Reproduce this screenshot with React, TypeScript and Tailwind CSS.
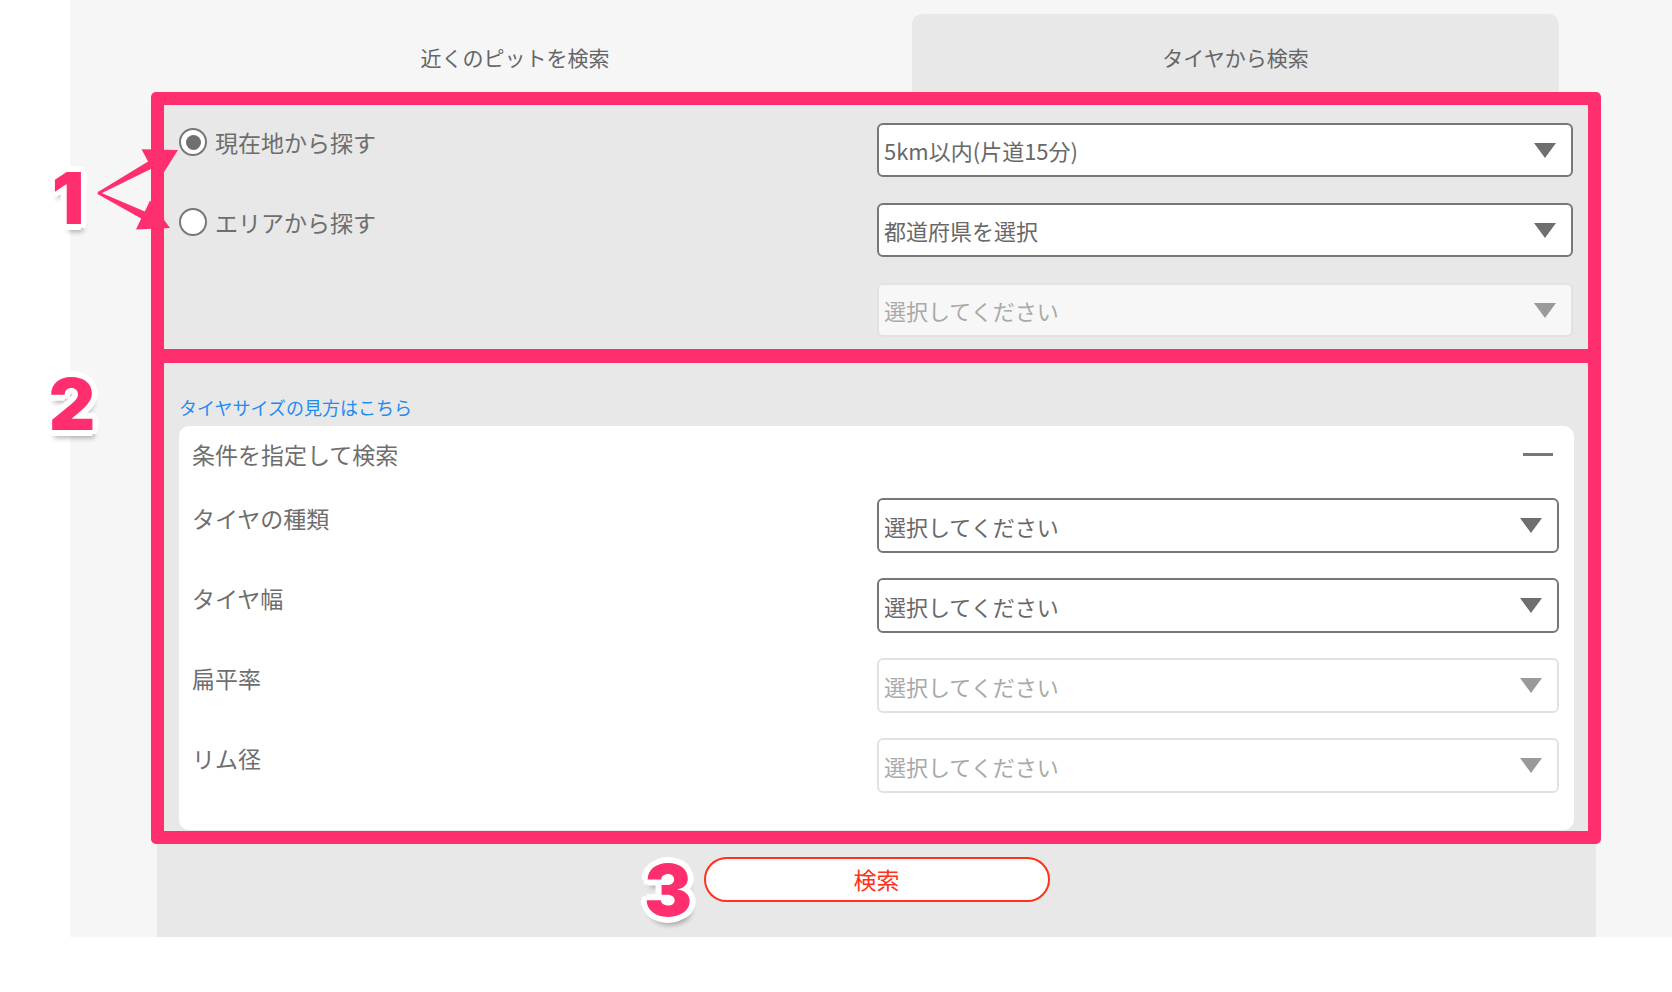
import clsx from 'clsx'

const PINK = '#ff2e6e'

interface SelectBoxProps {
  /** 表示テキスト */
  value: string
  /** 未選択状態（グレー表示） */
  disabled?: boolean
  /** 背景をグレーにする */
  grayBg?: boolean
  height?: string
}

// ▼ マーク
function Caret({ disabled }: { disabled?: boolean }) {
  return (
    <svg width="22" height="15" viewBox="0 0 22 15" className="shrink-0">
      <polygon points="0,0 22,0 11,15" fill={disabled ? '#9a9a9a' : '#6f6f6f'} />
    </svg>
  )
}

function SelectBox({ value, disabled, grayBg, height = 'h-[54px]' }: SelectBoxProps) {
  return (
    <div
      className={clsx(
        'flex w-full items-center justify-between rounded-[6px] border-2 pr-[15px] pl-[5px]',
        height,
        disabled ? 'border-[#e2e2e2] text-[#a9a9a9]' : 'border-[#777777] text-[#686868]',
        grayBg ? 'bg-[#f7f7f7]' : 'bg-white',
      )}
    >
      <span className="text-[22px] leading-[30px]">{value}</span>
      <Caret disabled={disabled} />
    </div>
  )
}

function Radio({ checked, label }: { checked?: boolean; label: string }) {
  return (
    <div className="flex items-center gap-[8px] pt-[4px]">
      <div className="flex h-[28px] w-[28px] items-center justify-center rounded-full border-[2.5px] border-[#777777] bg-white">
        {checked && <div className="h-[15px] w-[15px] rounded-full bg-[#707070]"></div>}
      </div>
      <span className="text-[23px] leading-[30px] text-[#6e6e6e]">{label}</span>
    </div>
  )
}

// 注釈の番号
function Badge({ n, className }: { n: string; className: string }) {
  return (
    <div
      className={clsx(
        'absolute w-[64px] text-center text-[72px] leading-none font-black text-[#ff2e6e] [font-family:Inter,"Liberation_Sans",sans-serif]',
        '[text-shadow:6px_0_#fff,-6px_0_#fff,0_6px_#fff,0_-6px_#fff,4px_4px_#fff,-4px_4px_#fff,4px_-4px_#fff,-4px_-4px_#fff,3px_-5px_#fff,-3px_5px_#fff,5px_3px_#fff,-5px_-3px_#fff,2px_8px_5px_rgba(0,0,0,0.3)]',
        className,
      )}
    >
      {n}
    </div>
  )
}

export default function App() {
  const tireRows = [
    { label: 'タイヤの種類', disabled: false },
    { label: 'タイヤ幅', disabled: false },
    { label: '扁平率', disabled: true },
    { label: 'リム径', disabled: true },
  ]

  return (
    <div className="relative h-[992px] w-[1672px] overflow-hidden bg-white [font-family:'Noto_Sans_CJK_JP','Noto_Sans',sans-serif]">
      <div className="ml-[70px] h-[937px] w-[1602px] bg-[#f6f6f6] pt-[14px] pl-[87px]">
        {/* タブ */}
        <div className="flex h-[80px]">
          <div className="flex w-[716px] items-center justify-center pt-[8px] text-[21px] text-[#666666]">
            近くのピットを検索
          </div>
          <div className="ml-[39px] flex w-[647px] items-center justify-center rounded-t-[10px] bg-[#e8e8e8] pt-[8px] text-[21px] text-[#666666]">
            タイヤから検索
          </div>
        </div>

        {/* パネル */}
        <div className="h-[843px] w-[1439px] bg-[#e8e8e8] px-[22px] pt-[29px]">
          {/* エリア */}
          <div className="flex flex-col gap-[26px]">
            <div className="flex">
              <div className="w-[698px]">
                <Radio checked label="現在地から探す" />
              </div>
              <div className="w-[696px]">
                <SelectBox value="5km以内(片道15分)" />
              </div>
            </div>
            <div className="flex">
              <div className="w-[698px]">
                <Radio label="エリアから探す" />
              </div>
              <div className="w-[696px]">
                <SelectBox value="都道府県を選択" />
              </div>
            </div>
            <div className="flex">
              <div className="w-[698px]"></div>
              <div className="w-[696px]">
                <SelectBox value="選択してください" disabled grayBg />
              </div>
            </div>
          </div>

          {/* タイヤ */}
          <p className="mt-[58px] text-[18px] leading-[24px] text-[#1f8cf2]">タイヤサイズの見方はこちら</p>
          <div className="mt-[7px] rounded-[10px] bg-white pt-[13px] pr-[14px] pb-[37px] pl-[13px]">
            <div className="flex items-center justify-between pr-[7px]">
              <span className="text-[23px] leading-[30px] text-[#6e6e6e]">条件を指定して検索</span>
              <div className="h-[3px] w-[30px] bg-[#777777]"></div>
            </div>
            <div className="mt-[29px] flex flex-col gap-[25px]">
              {tireRows.map((row) => (
                <div key={row.label} className="flex">
                  <div className="w-[685px] pt-[5px] text-[23px] leading-[30px] text-[#6e6e6e]">{row.label}</div>
                  <div className="w-[682px]">
                    <SelectBox value="選択してください" disabled={row.disabled} height="h-[55px]" />
                  </div>
                </div>
              ))}
            </div>
          </div>

          <div className="mt-[27px] flex justify-center">
            <button className="flex h-[45px] w-[346px] items-center justify-center rounded-full border-2 border-[#ff3118] bg-white text-[23px] text-[#ff3118]">
              検索
            </button>
          </div>
        </div>
      </div>

      {/* 注釈の枠 */}
      <div className="pointer-events-none absolute top-[92px] left-[151px] h-[271px] w-[1450px] rounded-[5px] border-[13px] border-[#ff2e6e]"></div>
      <div className="pointer-events-none absolute top-[349px] left-[151px] h-[495px] w-[1450px] rounded-[5px] border-[13px] border-[#ff2e6e]"></div>

      {/* 矢印 */}
      <svg className="pointer-events-none absolute top-0 left-0" width="260" height="260" viewBox="0 0 260 260">
        <polygon
          points="98,192 148.1,161.5 141.5,149.2 178,150 158.5,180.8 151.9,168.5 99,194.5"
          fill={PINK}
        />
        <polygon
          points="98,191.5 144.8,211.4 150,200.6 170,228 136,229.4 141.2,218.6 97.5,194"
          fill={PINK}
        />
      </svg>

      <Badge n="1" className="top-[162px] left-[36px]" />
      <Badge n="2" className="top-[368px] left-[40px]" />
      <Badge n="3" className="top-[854px] left-[636px]" />
    </div>
  )
}
